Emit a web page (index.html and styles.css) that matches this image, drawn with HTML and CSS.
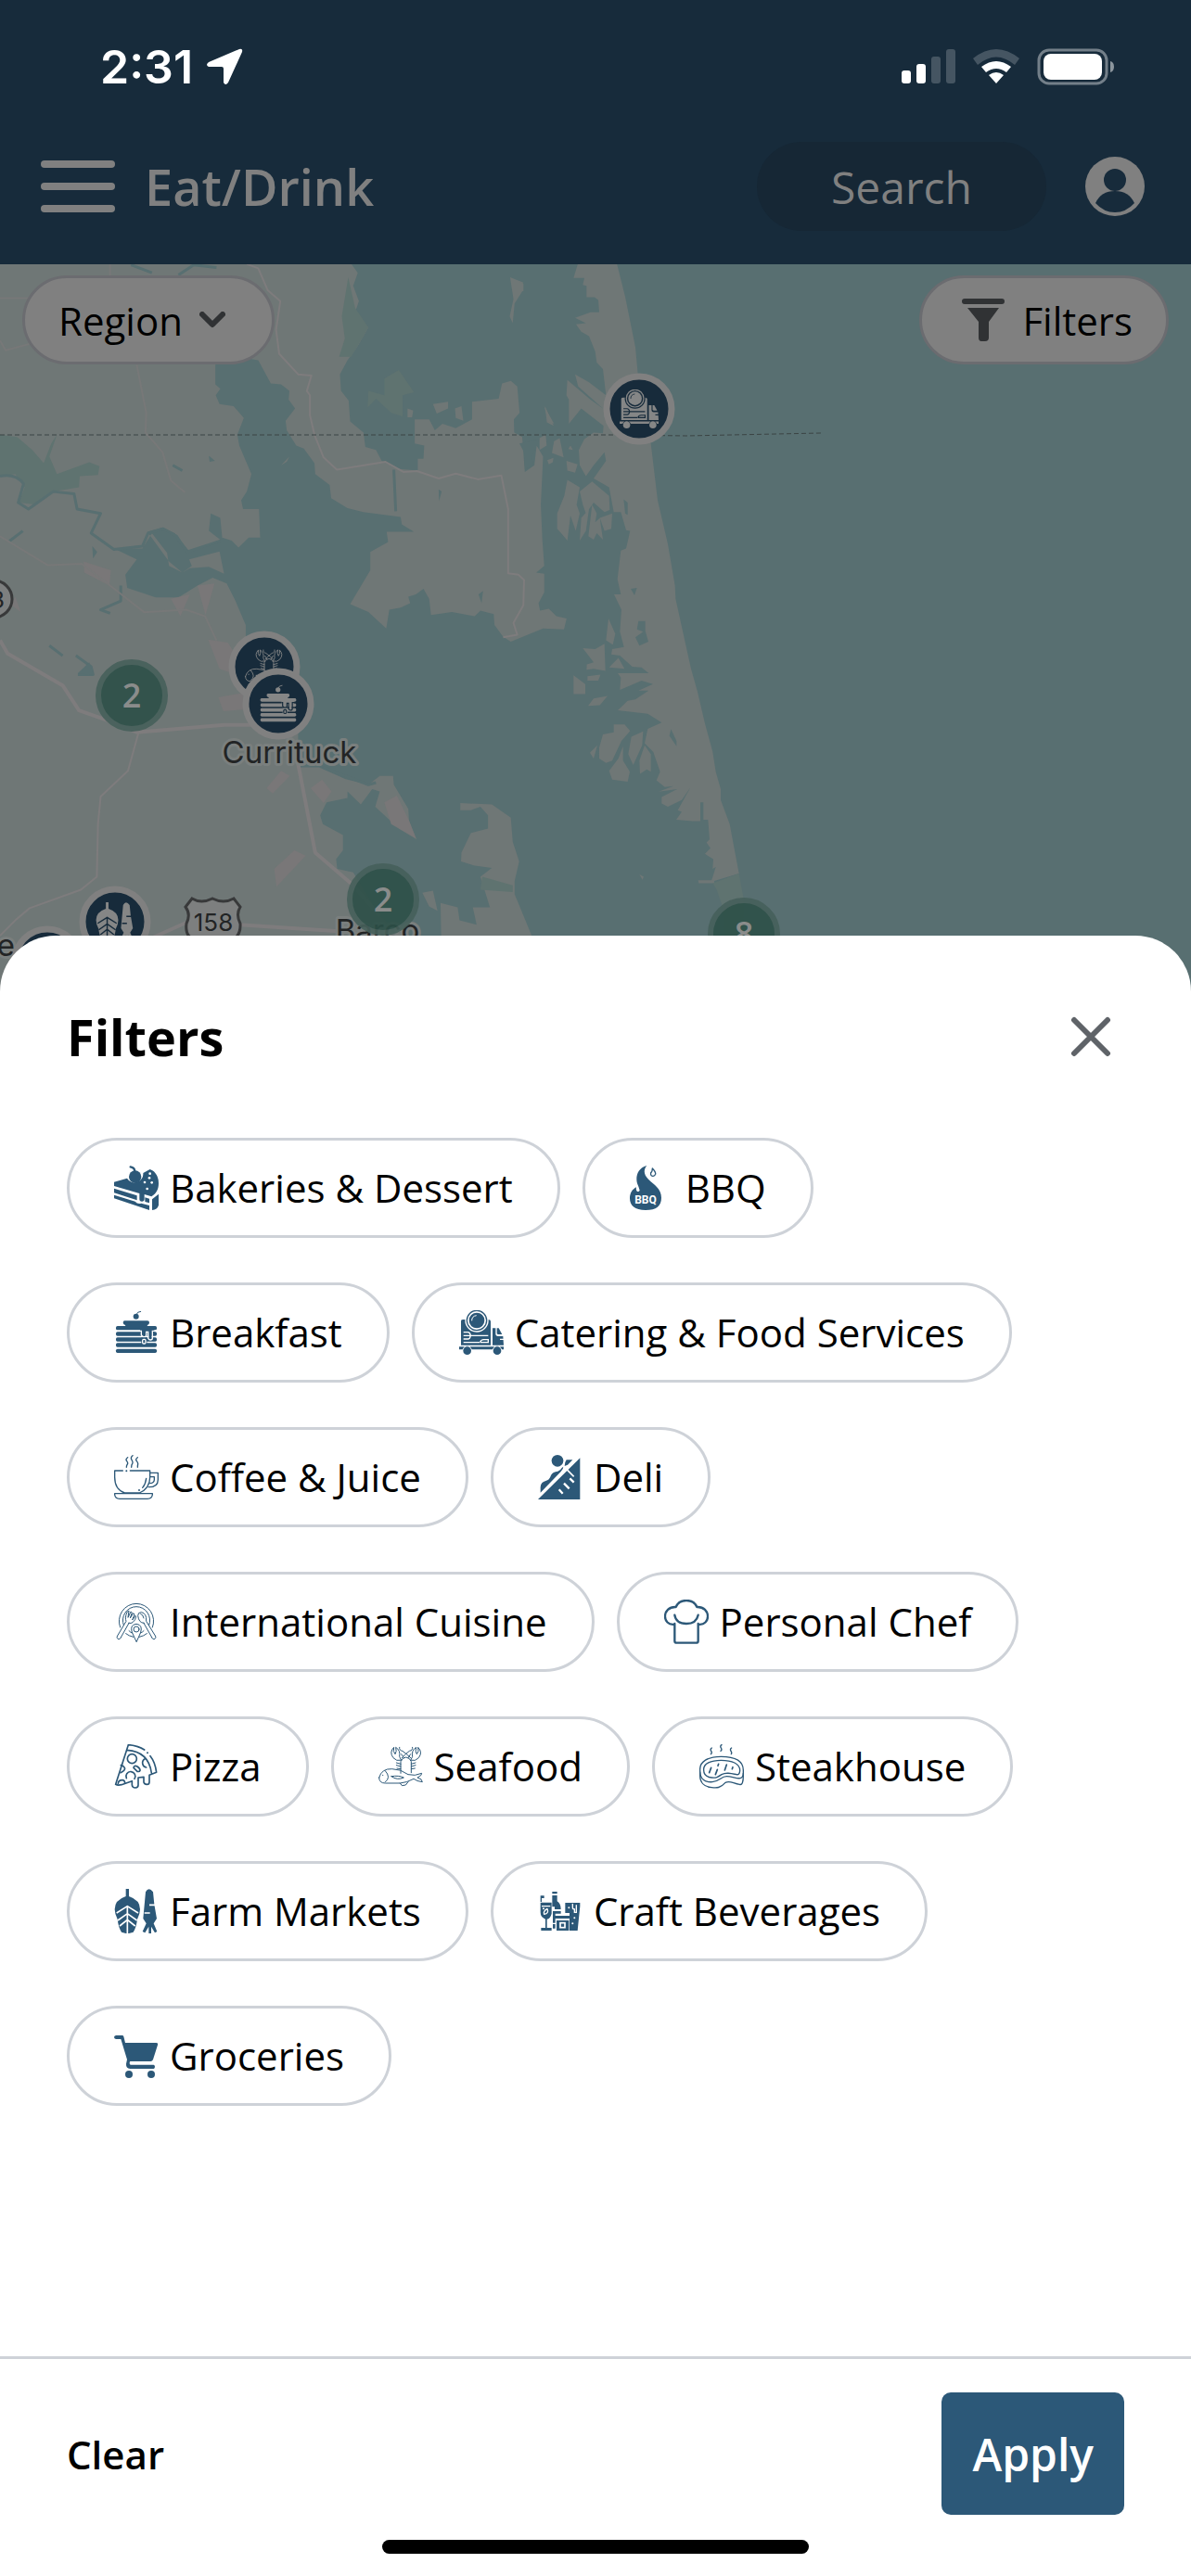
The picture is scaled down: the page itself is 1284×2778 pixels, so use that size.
FILE: index.html
```
<!DOCTYPE html>
<html lang="en">
	<head>
		<meta charset="utf-8">
		<meta name="viewport" content="width=device-width, initial-scale=1">
		<title>Eat/Drink</title>
		<link rel="stylesheet" href="styles.css">
	</head>
	<body>

		<!-- icon set, 144 x 144 grid. "cut" parts take the background colour -->
		<svg class="sprite" aria-hidden="true">
			<symbol id="icon-bakery" viewBox="0 0 144 144">
				<path d="M0 53L42 41A28 28 0 0 0 94 24L116 12C132 17 144 34 144 57C144 78 136 90 121 100L98 93V108A8 8 0 0 1 82 108V90L0 66Z" />
				<path d="M0 74L74 97V112L0 88ZM0 95L68 116Q76 126 88 122L114 129V144L0 106ZM100 103L114 107V121L100 117Z" />
				<path d="M123 109L144 92V128Q140 142 123 144Z" />
				<circle cx="68" cy="36" r="20" />
				<path class="line w7" d="M53 4Q66 6 67 18" />
				<g class="cut"><circle cx="116" cy="26" r="4" /><circle cx="99" cy="54" r="4" /><circle cx="122" cy="55" r="4" /><circle cx="107" cy="75" r="4" /><circle cx="114" cy="40" r="4" /></g>
			</symbol>
			<symbol id="icon-bbq" viewBox="0 0 144 144">
				<path d="M55 0C24 8 18 38 24 58Q30 72 32 80C28 88 18 84 21 70C9 76 0 88 0 106C0 130 16 144 51 144C86 144 102 130 102 104C102 74 78 62 60 44C44 30 44 12 55 0Z" />
				<path class="line w4" d="M73 9Q85 22 83 28Q80 35 74 34Q66 33 68 23Q73 20 73 9Z" />
				<text class="cut bbq-text" x="51" y="124" text-anchor="middle">BBQ</text>
			</symbol>
			<symbol id="icon-breakfast" viewBox="0 0 144 144">
				<circle cx="71" cy="20" r="9" />
				<path class="line w3" d="M72 14Q74 4 86 4" />
				<path d="M34 34H108Q114 34 114 40Q114 47 108 48L106 55H38L36 48Q29 47 29 40Q29 34 34 34Z" />
				<rect x="6" y="51" width="132" height="13" rx="5" />
				<rect x="6" y="70" width="132" height="13" rx="5" />
				<rect x="6" y="88" width="132" height="13" rx="5" />
				<rect x="6" y="106" width="132" height="13" rx="5" />
				<rect x="6" y="125" width="132" height="13" rx="5" />
				<!-- syrup -->
				<path d="M84 62H130V72H122V92Q116 98 112 92V76H104V82Q98 88 92 82V72H84Z" />
				<path class="cut-line w4" d="M84 67H88V80Q92 88 98 86Q104 86 104 80V70H110V90Q112 96 117 96Q124 96 124 90V67H138" />
				<rect x="88" y="88" width="18" height="24" />
				<rect class="cut-line w4" x="92" y="94" width="10" height="14" rx="4" />
			</symbol>
			<symbol id="icon-truck" viewBox="0 0 144 144">
				<path d="M6 34Q6 30 14 30H94Q102 30 102 36V113H6Z" />
				<circle class="cut" cx="57" cy="33" r="38" />
				<circle class="line w4" cx="57" cy="33" r="32" />
				<circle cx="57" cy="33" r="25" />
				<path class="cut-line w3" d="M41 34A17 17 0 0 1 56 17" />
				<path d="M108 58H118V76Q118 84 126 84H142L144 113H108Z" />
				<path d="M122 58H128L139 78H127Q122 78 122 74Z" />
				<path class="cut-line w4" d="M14 71H28Q35 71 37 82H94M14 93H28Q35 93 37 82M14 82H36M14 104H66M68 104Q70 95 80 95H94V104H68M132 94H144" />
				<path d="M0 118H144V127H138A16 16 0 0 0 108 127H41A16 16 0 0 0 11 127H0Z" />
				<circle cx="26" cy="131" r="13" />
				<circle cx="123" cy="131" r="13" />
			</symbol>
			<symbol id="icon-coffee" viewBox="0 0 144 144">
				<path class="line w4" d="M44 8Q36 14 41 20T43 30T40 40M60 2Q52 8 57 16T59 28T56 40M76 8Q68 14 73 20T77 30T76 40" />
				<path class="line w4" d="M28 51H2V72Q2 112 34 123H82Q116 108 116 72V51H52M116 58H142V80Q142 104 112 104M118 71H130V80Q130 90 117 92M104 76Q102 94 92 106" />
				<path class="line w4" d="M2 125H124V129Q122 142 108 142H18Q4 142 2 129Z" />
				<circle cx="40" cy="52" r="3" /><circle cx="81" cy="114" r="3" />
			</symbol>
			<symbol id="icon-deli" viewBox="0 0 144 144">
				<path d="M0 144L136 10V144Z" />
				<circle cx="63" cy="19" r="19" />
				<path d="M8 122V104Q9 88 25 84Q37 82 42 66Q48 54 64 53Q73 50 77 42L82 38Q82 46 74 54ZM86 36Q86 24 92 16H112L96 32Z" />
				<path class="cut-line w5" d="M84 38L116 70" />
				<path class="cut-line w7" d="M103 76L116 89M84 92L101 109M68 112L80 125" />
			</symbol>
			<symbol id="icon-international" viewBox="0 0 144 144">
				<path class="line w3" d="M20 90A56 56 0 1 1 124 90M38 110Q48 118 62 121M82 121Q96 118 106 110M31 83A44 44 0 1 1 113 83M48 101Q52 106 59 108M85 108Q92 106 96 101" />
				<path class="line w3" d="M48 76L20 126Q15 132 10 125Q8 121 11 117L39 70Q34 60 42 40L48 36L45 58L54 39L58 42L52 60L62 44L66 48L59 66L69 52L71 55Q70 66 60 74Q55 78 48 76Z" />
				<path class="line w3" d="M96 76L124 126Q129 132 134 125Q136 121 133 117L104 70Q106 44 88 41Q77 41 77 52Q80 76 96 76ZM86 46Q94 48 96 60" />
				<path class="line w3" d="M72 136L58 106Q50 82 72 79Q94 82 86 106Z" />
				<circle class="line w3" cx="72" cy="96" r="9" />
			</symbol>
			<symbol id="icon-chef" viewBox="0 0 144 144">
				<path class="line w7" d="M34 80C-8 86-8 22 38 24C50-4 94-4 106 24C152 22 152 86 110 80M34 50Q38 78 72 78Q104 78 110 50M34 78V134Q34 140 42 140H102Q110 140 110 134V78" />
			</symbol>
			<symbol id="icon-pizza" viewBox="0 0 144 144">
				<path class="line w5" d="M46 2L5 130Q12 134 24 131L58 119V132Q59 141 69 141Q78 141 78 132V108L96 106V123Q98 130 106 130Q114 130 114 122V100L137 91Q133 58 117 38M46 2Q76 4 98 18M42 19Q112 24 121 93" />
				<circle class="line w5" cx="58" cy="47" r="15" />
				<path class="line w5" d="M100 47A15 15 0 0 0 104 75M21 92Q38 84 34 76Q30 69 22 68M40 110A15 15 0 1 1 66 112M13 127Q14 116 27 116Q34 116 35 125M63 76Q65 67 75 72Q85 79 84 85Q82 90 75 88Z" />
				<circle cx="108" cy="28" r="3" />
			</symbol>
			<symbol id="icon-seafood" viewBox="0 0 144 144">
				<!-- lobster -->
				<path class="line w3" d="M72 94V56Q76 44 89 42Q102 44 106 56V92M82 44L74 32M96 44L104 32" />
				<path class="line w3" d="M72 52Q58 56 48 44Q34 26 50 10Q46 24 54 32Q60 24 56 10Q72 20 68 40L74 52M106 52Q120 56 130 44Q144 26 128 10Q132 24 124 32Q118 24 122 10Q106 20 110 40L104 52" />
				<path class="line w3" d="M68 10Q66 20 78 22Q94 34 104 44M110 10Q112 20 100 22Q84 34 76 44" />
				<path class="line w3" d="M72 64L58 60M72 72L58 68M72 80L60 78M106 64L120 60M106 72L120 68M106 80L118 78" />
				<!-- fish -->
				<path class="line w3" d="M2 108Q10 78 44 80Q72 80 96 98L118 100L140 94Q142 100 126 108Q142 112 142 122Q124 120 114 112Q92 124 70 126H22Q2 126 2 108ZM22 86Q42 108 22 122M42 104Q66 100 82 108Q60 118 42 104ZM70 126L76 134L88 132L96 122" />
				<circle cx="14" cy="100" r="2" />
			</symbol>
			<symbol id="icon-steak" viewBox="0 0 144 144">
				<path class="line w4" d="M40 12Q34 16 38 22T37 32M72 2Q66 6 70 12T69 22M104 12Q98 16 102 22T103 32" />
				<path class="line w4" d="M2 84C0 56 28 40 70 40C116 40 142 54 142 84V102Q142 134 130 130C110 128 100 116 84 124C68 142 56 142 40 140C14 138 2 122 2 102Z" />
				<path class="line w4" d="M2 90C4 114 18 124 42 122C66 120 70 104 88 104C106 104 120 112 132 110Q142 108 142 94" />
				<path class="line w4" d="M14 84C12 62 38 52 70 52C104 52 132 62 131 86Q130 100 120 98C102 94 86 90 72 98C60 106 54 110 40 108C22 106 14 98 14 84Z" />
				<path class="line w5" d="M38 76L32 92M58 82L52 98M88 66L82 84M108 74L106 80M62 64L60 70" />
			</symbol>
			<symbol id="icon-farm" viewBox="0 0 144 144">
				<path d="M38 0H48V24Q84 36 84 66Q84 80 75 98Q72 124 62 140L48 144H38L24 140Q14 124 11 98Q2 80 2 66Q2 36 38 24Z" />
				<path class="cut-line w5" d="M43 54V144M8 78L43 56L78 78M12 102L43 80L74 102M18 120L43 100L68 120" />
				<path d="M102 10Q112-8 126 10L130 50L138 96L128 112L139 138L132 142L120 122V144H112V122L100 142L92 138L104 112L94 96Z" />
				<path class="cut-line w5" d="M114 52H132M98 78H116" />
			</symbol>
			<symbol id="icon-craft" viewBox="0 0 144 144">
				<path d="M8 22H20V30H12V42H8ZM46 9H62V16H46ZM46 21H62V40Q74 48 74 66H54V58H46V44ZM8 44H44V80Q40 96 29 98V126H44V135H10V126H24V98Q8 92 8 76ZM88 45H136V56L128 135H102V78H88ZM48 72H74V80H56V128H48ZM56 87H102V96H56ZM60 102H100V135H60Z" />
				<path class="cut-line w4" d="M12 56H40M30 64Q16 72 20 82Q36 80 30 64M112 48V60Q112 66 118 66V76H124V52M46 112H58M22 22L36 40" />
				<rect class="cut-line w5" x="72" y="110" width="15" height="15" />
				<g class="cut"><circle cx="100" cy="61" r="3" /><circle cx="118" cy="94" r="3" /><circle cx="112" cy="112" r="3" /><circle cx="18" cy="64" r="3" /></g>
			</symbol>
			<symbol id="icon-cart" viewBox="0 0 144 144">
				<path d="M6 6H26Q30 6 31 10L36 30H136Q143 30 141 37L126 84Q124 90 118 90H52Q50 91 50 96Q50 101 54 101H128Q132 102 132 107T128 114H52Q38 112 39 98L42 84L22 18H6Q0 17 0 12T6 6Z" />
				<circle cx="48" cy="132" r="12" />
				<circle cx="120" cy="132" r="12" />
			</symbol>
		</svg>

		<header class="app-header">
			<div class="status-bar">
				<div class="status-left">
					<span class="clock">2:31</span>
					<svg class="location" width="40" height="40" viewBox="0 0 40 40"><path d="M36 1Q40 0 39 4L24 37Q21 41 19 37V22Q19 20 17 20H3Q-1 18 3 15Z" /></svg>
				</div>
				<div class="status-right">
					<svg width="58" height="38" viewBox="0 0 58 38">
						<rect x="0" y="23" width="10" height="14" rx="3" /><rect x="16" y="16" width="10" height="21" rx="3" />
						<rect class="faint" x="32" y="8" width="10" height="29" rx="3" /><rect class="faint" x="48" y="0" width="10" height="37" rx="3" />
					</svg>
					<svg width="52" height="38" viewBox="0 0 52 38">
						<path class="faint" d="M1 10Q26-10 51 10L46 17Q26 0 6 17Z" />
						<path d="M10 19Q26 7 42 19L37 25Q26 17 15 25ZM18 28Q26 22 34 28L26 37Z" />
					</svg>
					<svg width="84" height="40" viewBox="0 0 84 40">
						<rect class="battery-case" x="2" y="2" width="73" height="36" rx="11" />
						<rect x="7" y="6" width="63" height="28" rx="8" />
						<path class="battery-cap" d="M79 14Q83 15 83 20T79 26Z" />
					</svg>
				</div>
			</div>
			<nav class="nav-bar">
				<button type="button" class="menu-button" aria-label="Menu"><span></span><span></span><span></span></button>
				<h1 class="page-title">Eat/Drink</h1>
				<input type="text" class="search-box" placeholder="Search" aria-label="Search">
				<a href="#account" class="account" aria-label="Account">
					<svg width="64" height="64" viewBox="0 0 64 64">
						<circle cx="32" cy="32" r="32" />
						<circle class="account-cut" cx="32" cy="25" r="12" />
						<path class="account-cut" d="M11 50Q17 37 32 37T53 50Q44 60 32 60T11 50Z" />
					</svg>
				</a>
			</nav>
		</header>

		<main class="map-area">
			<svg class="map" viewBox="0 285 1284 788" preserveAspectRatio="xMidYMin slice">
				<rect class="water" x="0" y="285" width="1284" height="788" />

				<!-- mainland -->
				<g transform="translate(0 280) scale(.40944 .47192)">
					<path class="land" d="M0 0H917L942 30L930 60L945 95L935 120L970 155L940 200L915 230L895 262L898 300L918 322L922 370L957 395L962 428L990 435L1005 460L1045 478L1100 482L1100 455L1115 455L1117 425L1092 420L1092 365H1130L1145 390L1165 375L1200 385L1243 365V325L1313 318L1322 283L1345 277L1362 290L1368 350L1353 365L1354 395L1375 405L1382 485L1407 470L1413 425L1430 450L1424 560L1428 640L1433 700L1412 715L1433 718V760L1418 785L1422 802L1445 798L1465 815L1492 820L1485 845L1430 843L1345 873L1325 862L1302 835L1300 810L1265 802L1250 815L1190 805L1135 812L1130 775L1115 752L1095 765L1075 770L1080 785L1055 795L1025 800L1017 843L970 805L922 787L975 710V668L1022 645L1018 622H1090L1058 605L1055 588L957 577L915 568L872 545L868 515L830 490L828 465L800 432L780 425L755 390L752 368L777 340L760 320L762 300L740 285L713 283L680 230L640 224L567 240V285L580 295L568 310L578 330L615 335L642 362L625 400L630 425L662 490L650 530L635 550L640 570H682L685 635H655L628 658L610 642L585 635L580 590L555 580L550 620L580 640L500 668L460 625L428 612L388 622L445 690L480 715L505 700L498 685L578 667L590 718L550 702L500 705L480 715L445 700L440 670L400 625L375 660H300L360 685L330 720L335 750L410 772H470L520 745L560 727L597 740L620 780L647 835V880L785 1000V1160L840 1160L910 1187L970 1200L1000 1180H1035L1037 1200L1075 1255L1077 1282L1097 1325L1050 1300L988 1250L1000 1215L980 1210L950 1245L915 1215L915 1230L860 1240L843 1270L850 1290L903 1315V1350L885 1370L888 1392L930 1400L1000 1500L1100 1570V1800H0Z" />
					<path class="land" d="M1212 1242L1295 1245L1345 1275L1350 1330L1367 1375L1355 1420V1450L1400 1545V1700H1165L1160 1470L1205 1480L1210 1510L1255 1520L1245 1480H1290L1265 1410L1295 1390L1250 1385L1214 1375L1215 1355L1240 1310L1285 1300V1270L1265 1250L1240 1258H1212ZM1112 1447L1140 1442L1152 1488L1130 1478ZM1343 40L1377 52V70L1355 100L1350 145L1342 130L1352 90ZM1435 335L1458 380L1440 372ZM1140 330L1180 325V340L1150 352ZM1073 340L1088 345L1085 360H1073ZM1198 340L1215 335L1220 368L1200 362ZM740 470L762 450L755 462Z" />
					<path class="park" d="M0 400L45 405L85 435L115 465L135 420L150 400L130 450L150 490L235 463L262 472L258 492L210 495L208 520L140 530L95 560L50 555L65 520L40 490L0 495ZM917 40L935 110L970 155L925 222L893 222L908 180L900 130ZM1050 252L1090 303L1060 310V358L1030 350L990 318L968 338L970 300L1012 310V272ZM1270 1410L1350 1430V1445L1265 1440Z" />
					<path class="built" d="M220 690L292 710L288 745L222 715ZM450 775L500 765L475 815ZM520 745L565 740L541 812ZM548 868L600 875L640 930L610 945L578 935ZM575 1000L640 990V1028L588 1032ZM740 1168L763 1180L718 1220L702 1208ZM848 1188L873 1215L852 1242L818 1208ZM1012 1240L1045 1225L1077 1282L1095 1322L1030 1290ZM775 1350L805 1362L728 1433L722 1392ZM40 770L55 805L30 790Z" />
					<path class="creek" d="M0 495Q40 488 62 512L48 555L75 570L140 530L195 535L203 570L265 580L240 625L300 662L375 655L390 625L430 615L465 632L492 668L580 643M318 745V780L265 800L290 808M130 882L165 905M200 905L240 930L245 948H205M25 643L60 620M455 470L480 482M1037 480L1042 575M850 1160L970 1200L990 1195M470 35L510 12L570 18M345 12L400 30" />
					<path class="water" d="M1155 525L1163 530L1156 552ZM1260 765L1272 757L1268 785ZM205 945L248 950L235 920ZM550 448L566 460L552 462ZM243 655L256 668L245 683Z" />
					<path class="road" d="M650 10L680 20L705 70L738 95L727 160L735 215L785 262L820 265L808 300L816 310V355L828 400L852 452L887 480L1015 462L1062 485L1098 483L1155 500L1200 489L1258 502L1320 493L1338 570V717L1365 720L1380 732L1378 790L1352 830L1362 857L1325 863" />
					<path class="road minor" d="M360 240L385 350L383 395L428 440L450 505L487 532M0 632L125 698L215 695L290 745L380 806L490 800L540 815L570 870M0 88H80M0 185L15 207L80 192M290 10V40" />
					<path class="road" d="M0 1545L40 1510L78 1482L213 1440L255 1410L258 1290L265 1227L337 1168L365 1080" />
					<path class="road main" d="M0 870L20 900L165 973L208 1030L290 1055L360 1080L590 1063H700M780 1130L800 1220L830 1355L930 1430L1000 1500M400 1550L490 1515M630 1520L900 1535" />
				</g>

				<!-- barrier island -->
				<g transform="translate(560 280) scale(.33333 .47192)">
					<path class="land" d="M193 0H312L342 85L375 200L388 300L425 420L447 550L480 650L503 745L505 775L555 935L575 985L600 1060L625 1125L635 1170L651 1210V1235L680 1290L710 1403L620 1422L635 1388L625 1392L627 1370L600 1358L618 1345L605 1332L615 1325L610 1280H595V1240H585V1283H560L507 1280L525 1262L512 1258L553 1206L525 1235L480 1250L460 1243V1228L510 1210L450 1216L498 1203L470 1205L443 1190L455 1170L433 1125L405 1105L415 1072L460 1058L415 1038L318 1030L350 1008L375 1005L418 985H385L432 970L395 962L325 983L328 955L318 945H418L395 932L365 930L325 905L297 902L300 890L338 885L325 850L330 800L306 765L328 765L317 730L328 665L345 660L358 620L345 618L328 577H305L290 520L240 500L280 460L275 440L240 470L215 495L195 470L192 435L210 410L240 395L270 397L272 380L200 340L160 375V320L152 310L155 275L230 320L270 340L190 290L180 262L225 280L280 310L270 250L250 235L245 210L225 175L200 165L183 148L215 145L180 133L230 120H258L255 92L243 86H217V60L205 58L210 42H175Z" />
					<path class="land" d="M80 335L112 375L93 370ZM130 408L143 452L105 442L112 415ZM65 408L85 400L88 425L65 435ZM90 458L110 453L108 463L95 468ZM165 425L173 435L158 433ZM152 460L188 468L180 487L155 482ZM155 503L195 520L185 560L195 580L182 620L165 585L155 642L135 625L122 615V580L145 540ZM195 530L235 507L290 540L292 572L275 577L240 555L215 580L205 560ZM235 560L250 580L245 600L260 590L270 640L250 625L240 640L223 632ZM260 590L300 580L297 615L275 620ZM200 590L225 570L215 620L195 642ZM288 820L310 855L302 880L280 870ZM205 888L245 890L275 878L278 940L240 935L217 937L218 925L240 920ZM320 910L340 935L290 932ZM175 950L213 970V993H175ZM220 952L262 948L255 962H220ZM240 1003L285 997L260 1018L222 1020ZM305 1062H340L358 1077L330 1100L300 1145L280 1150L258 1140V1115L270 1085L305 1080ZM335 1112V1145L357 1170L350 1193L300 1188L290 1168L320 1140ZM252 1110L240 1140L228 1127ZM362 1090L400 1078L397 1110L368 1155L352 1130ZM405 1110L425 1130V1170L412 1165L390 1175L388 1145ZM388 1405L402 1410L398 1417ZM578 1418H630V1425H580ZM0 50L13 55V72H0Z" />
					<path class="water" d="M360 752L380 750L372 767ZM385 826H407V848L417 873L388 882L375 863L400 850L380 845ZM490 1073L508 1100V1112L485 1088ZM337 548L350 555V583L342 580ZM0 420L15 440L18 480L45 470L40 450L65 410Z" />
					<path class="park" d="M710 1403L725 1460L722 1570H670L655 1475L638 1440L625 1425Z" />
				</g>

				<path class="state-line" d="M0 469H660L740 470L885 467" />

				<!-- road shields -->
				<circle class="shield" cx="-7" cy="646" r="20" />
				<text class="shield-text" x="-3" y="656" text-anchor="middle">3</text>
				<path class="shield" d="M207 969Q217 975 229 969Q241 975 252 969L259 978Q254 986 259 996Q260 1012 246 1014L230 1020L213 1014Q199 1012 201 996Q206 986 200 978Z" />
				<text class="shield-text" x="230" y="1004" text-anchor="middle">158</text>

				<!-- place names -->
				<text class="place" x="312" y="823" text-anchor="middle">Currituck</text>
				<text class="place" x="407" y="1015" text-anchor="middle">Barco</text>
				<text class="place" x="16" y="1031" text-anchor="end">e</text>

				<!-- clusters -->
				<g class="cluster"><circle cx="142" cy="750" r="36" /><text x="142" y="763" text-anchor="middle">2</text></g>
				<g class="cluster"><circle cx="413" cy="970" r="36" /><text x="413" y="983" text-anchor="middle">2</text></g>
				<g class="cluster"><circle cx="802" cy="1007" r="36" /><text x="802" y="1020" text-anchor="middle">8</text></g>

				<!-- pins -->
				<g class="pin"><circle cx="689" cy="441" r="35" /><use href="#icon-truck" x="668" y="420" width="42" height="42" /></g>
				<g class="pin"><circle cx="285" cy="719" r="35" /><use href="#icon-seafood" x="264" y="698" width="42" height="42" /></g>
				<g class="pin"><circle cx="300" cy="759" r="35" /><use href="#icon-breakfast" x="279" y="738" width="42" height="42" /></g>
				<g class="pin"><circle cx="51" cy="1037" r="35" /></g>
				<g class="pin"><circle cx="124" cy="994" r="35" /><use href="#icon-farm" x="103" y="973" width="42" height="42" /></g>
			</svg>

			<div class="map-tools">
				<button type="button" class="map-button">
					Region
					<svg class="chevron" width="28" height="18" viewBox="0 0 28 18"><path d="M3 3L14 14L25 3" /></svg>
				</button>
				<button type="button" class="map-button">
					<svg class="funnel" width="48" height="48" viewBox="0 0 48 48"><path d="M4 1H44Q47 1 47 4T44 7H4Q1 7 1 4T4 1ZM7 11H41L30 26V43Q30 47 26 47H22Q19 47 19 43V26Z" /></svg>
					Filters
				</button>
			</div>
		</main>

		<section class="sheet" role="dialog" aria-labelledby="sheet-title">
			<div class="sheet-header">
				<h2 class="sheet-title" id="sheet-title">Filters</h2>
				<button type="button" class="close-button" aria-label="Close">
					<svg width="44" height="44" viewBox="0 0 44 44"><path d="M4 4L40 40M40 4L4 40" /></svg>
				</button>
			</div>

			<div class="chips">
				<button type="button" class="chip"><svg><use href="#icon-bakery" /></svg>Bakeries &amp; Dessert</button>
				<button type="button" class="chip"><svg><use href="#icon-bbq" /></svg>BBQ</button>
				<button type="button" class="chip"><svg><use href="#icon-breakfast" /></svg>Breakfast</button>
				<button type="button" class="chip"><svg><use href="#icon-truck" /></svg>Catering &amp; Food Services</button>
				<button type="button" class="chip"><svg><use href="#icon-coffee" /></svg>Coffee &amp; Juice</button>
				<button type="button" class="chip"><svg><use href="#icon-deli" /></svg>Deli</button>
				<button type="button" class="chip"><svg><use href="#icon-international" /></svg>International Cuisine</button>
				<button type="button" class="chip"><svg><use href="#icon-chef" /></svg>Personal Chef</button>
				<button type="button" class="chip"><svg><use href="#icon-pizza" /></svg>Pizza</button>
				<button type="button" class="chip"><svg><use href="#icon-seafood" /></svg>Seafood</button>
				<button type="button" class="chip"><svg><use href="#icon-steak" /></svg>Steakhouse</button>
				<button type="button" class="chip"><svg><use href="#icon-farm" /></svg>Farm Markets</button>
				<button type="button" class="chip"><svg><use href="#icon-craft" /></svg>Craft Beverages</button>
				<button type="button" class="chip"><svg><use href="#icon-cart" /></svg>Groceries</button>
			</div>

			<div class="sheet-footer">
				<button type="button" class="clear-button">Clear</button>
				<button type="button" class="apply-button">Apply</button>
			</div>
			<div class="home-indicator"></div>
		</section>

	</body>
</html>
```

FILE: styles.css
```
:root {
	--navy: #172b3b;
	--blue: #2c5878;
	--dim: #808080;
	--border: #ced2d8;
	--cut: #fff;
}

* {
	box-sizing: border-box;
}

body {
	margin: 0;
	min-height: 100vh;
	display: flex;
	flex-direction: column;
	background-color: #fff;
	font-family: "Open Sans", "Noto Sans", sans-serif;
	font-size: 42px;
	color: #000;
}

button,
input {
	font: inherit;
	color: inherit;
	border: none;
	background: none;
	padding: 0;
	margin: 0;
}

svg {
	display: block;
	flex: none;
}

.sprite {
	position: absolute;
	width: 0;
	height: 0;
}

/* ---icon strokes--- */
.line {
	fill: none;
	stroke: currentColor;
	stroke-linecap: round;
	stroke-linejoin: round;
}

.cut {
	fill: var(--cut);
}

.cut-line {
	fill: none;
	stroke: var(--cut);
}

.w3 { stroke-width: 3; }
.w4 { stroke-width: 4; }
.w5 { stroke-width: 5; }
.w7 { stroke-width: 7; }

.bbq-text {
	font-family: "Roboto", sans-serif;
	font-size: 36px;
	font-weight: 700;
}

/* ---header--- */
.app-header {
	background-color: var(--navy);
	color: var(--dim);
}

.status-bar {
	height: 144px;
	padding: 0 82px 0 108px;
	display: flex;
	justify-content: space-between;
	align-items: center;
	color: #fff;
	fill: #fff;
}

.status-left,
.status-right {
	display: flex;
	align-items: center;
	gap: 18px;
}

.status-left {
	gap: 14px;
}

.clock {
	font-family: "Inter", sans-serif;
	font-size: 50px;
	font-weight: 600;
}

.faint {
	opacity: 0.2;
}

.battery-case {
	fill: none;
	stroke: #fff;
	stroke-width: 3;
	opacity: 0.4;
}

.battery-cap {
	opacity: 0.5;
}

.nav-bar {
	display: flex;
	align-items: center;
	padding: 9px 50px 36px 44px;
}

.menu-button {
	width: 80px;
	display: flex;
	flex-direction: column;
	gap: 16px;
}

.menu-button span {
	height: 8px;
	border-radius: 4px;
	background-color: var(--dim);
}

.page-title {
	margin: 0 auto 0 32px;
	font-size: 54px;
	font-weight: 600;
	line-height: 74px;
}

.search-box {
	width: 312px;
	height: 96px;
	margin-right: 42px;
	border-radius: 48px;
	background-color: #162735;
	font-size: 48px;
	text-align: center;
}

.search-box::placeholder {
	color: var(--dim);
	opacity: 1;
}

.account {
	fill: var(--dim);
}

.account-cut {
	fill: var(--navy);
}

/* ---map--- */
.map-area {
	position: relative;
	flex: 1;
	min-height: 400px;
	/* runs on behind the rounded corners of the sheet */
	margin-bottom: -64px;
	overflow: hidden;
	background-color: #586f71;
}

.map {
	position: absolute;
	inset: 0;
	width: 100%;
	height: 100%;
}

.water {
	fill: #586f71;
}

.land {
	fill: #6f7776;
}

.park {
	fill: #5f7370;
}

.built {
	fill: #797778;
}

.creek,
.road {
	fill: none;
	stroke: #586f71;
	stroke-width: 3;
	stroke-linejoin: round;
	vector-effect: non-scaling-stroke;
}

.road {
	stroke: #7e7c7d;
	stroke-width: 2;
}

.road.minor {
	stroke: #777878;
}

.road.main {
	stroke-width: 4;
}

.state-line {
	fill: none;
	stroke: #3b4444;
	stroke-width: 1;
	stroke-dasharray: 5 3;
}

.shield {
	fill: #7d7f7f;
	stroke: #38393a;
	stroke-width: 3;
}

.shield-text,
.place {
	font-family: "Inter", sans-serif;
	font-size: 26px;
	fill: #222425;
}

.place {
	font-size: 33px;
	stroke: #7a7f7e;
	stroke-width: 6;
	stroke-linejoin: round;
	paint-order: stroke;
}

.cluster circle {
	fill: #2d5048;
	stroke: #46605b;
	stroke-width: 6;
	opacity: 0.9;
}

.cluster text {
	fill: #8a8c8b;
	font-size: 36px;
	font-weight: 600;
}

.pin {
	--cut: #172b3b;
	color: #858686;
	fill: #858686;
}

.pin > circle {
	fill: var(--navy);
	stroke: #808080;
	stroke-width: 7;
}

.map-tools {
	position: absolute;
	top: 12px;
	left: 24px;
	right: 24px;
	display: flex;
	justify-content: space-between;
}

.map-button {
	height: 96px;
	padding: 0 36px;
	display: flex;
	align-items: center;
	gap: 18px;
	border: 3px solid #6b6c70;
	border-radius: 48px;
	background-color: var(--dim);
	fill: #303234;
}

.chevron {
	margin-right: 14px;
	fill: none;
	stroke: #303234;
	stroke-width: 6;
	stroke-linecap: round;
	stroke-linejoin: round;
}

.funnel {
	margin-left: 6px;
}

/* ---filter sheet--- */
.sheet {
	position: relative;
	background-color: #fff;
	border-radius: 60px 60px 0 0;
}

.sheet-header {
	display: flex;
	justify-content: space-between;
	align-items: center;
	padding: 72px;
}

.sheet-title {
	margin: 0;
	font-size: 54px;
	font-weight: 700;
	line-height: 74px;
}

.close-button {
	width: 72px;
	height: 72px;
	display: flex;
	justify-content: center;
	align-items: center;
}

.close-button svg {
	fill: none;
	stroke: #5f6368;
	stroke-width: 6;
	stroke-linecap: round;
}

.chips {
	display: flex;
	flex-wrap: wrap;
	gap: 48px 24px;
	padding: 0 72px 270px;
}

.chip {
	display: flex;
	align-items: center;
	gap: 12px;
	padding: 27px 48px;
	border: 3px solid var(--border);
	border-radius: 54px;
	line-height: 48px;
}

.chip svg {
	width: 48px;
	height: 48px;
	color: var(--blue);
	fill: var(--blue);
}

.sheet-footer {
	display: flex;
	justify-content: space-between;
	align-items: center;
	padding: 36px 72px 27px;
	border-top: 3px solid var(--border);
}

.clear-button {
	font-weight: 600;
}

.apply-button {
	height: 132px;
	padding: 0 33px;
	border-radius: 10px;
	background-color: var(--blue);
	color: #fff;
	font-size: 48px;
	font-weight: 600;
}

.home-indicator {
	width: 460px;
	height: 15px;
	margin: 0 auto 24px;
	border-radius: 8px;
	background-color: #000;
}
```
